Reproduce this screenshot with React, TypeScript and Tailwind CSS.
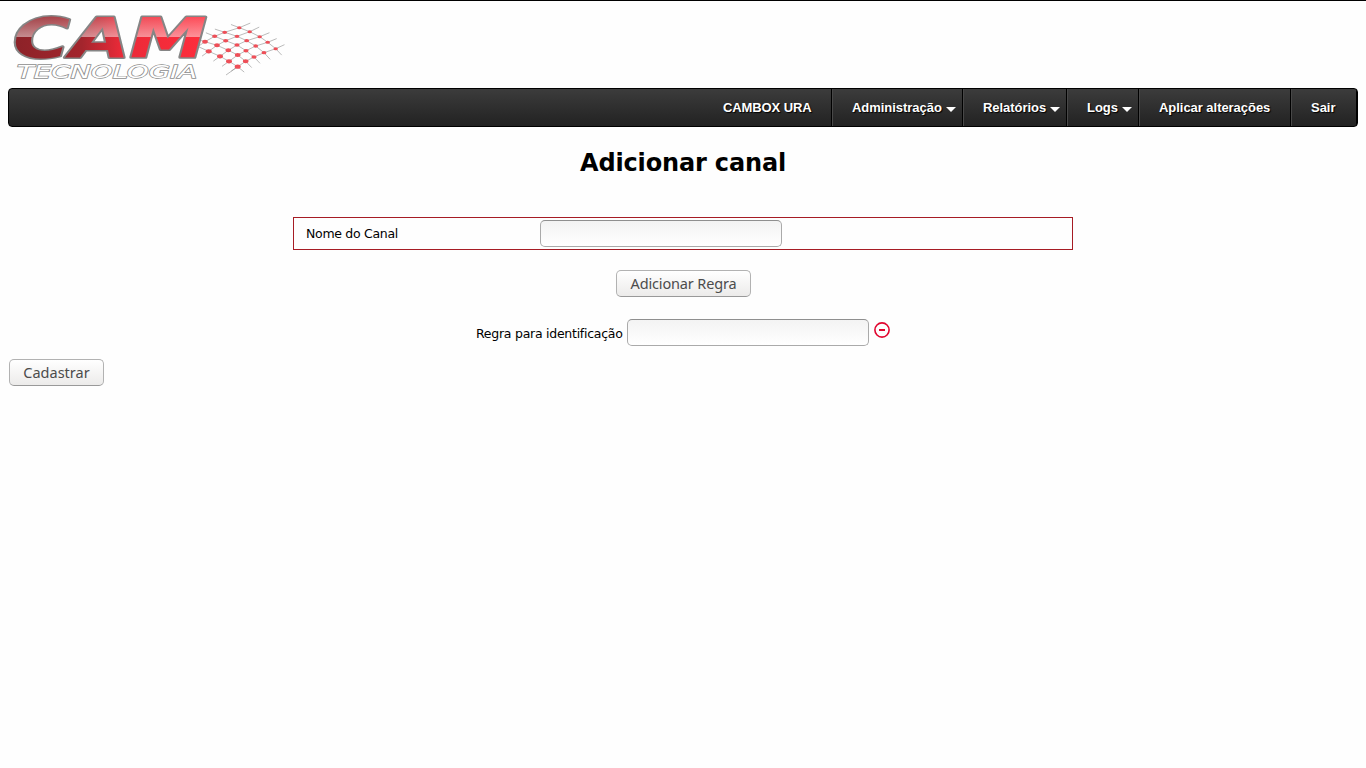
import type { ReactNode } from "react";

const mesh: [number, number][][] = [
  [[239.3, 27.7], [249.7, 31.7], [259.7, 36.7], [267.7, 42.3], [275.7, 48.7]],
  [[224.7, 32.3], [237, 36.3], [246.7, 40.7], [255.7, 46], [264, 52.7]],
  [[214.7, 36.3], [225.7, 40.7], [237, 45], [246, 50.7], [254, 57]],
  [[205, 41.7], [217, 45.3], [228.3, 50.3], [237.7, 55], [245.7, 61.3]],
  [[198, 46.5], [208.7, 51.3], [220, 56.3], [229, 61.3], [237.7, 66.7]],
];

function extend(points: [number, number][]) {
  const a = points[0];
  const b = points[1];
  const y = points[points.length - 2];
  const z = points[points.length - 1];
  const start = [a[0] - (b[0] - a[0]) * 0.8, a[1] - (b[1] - a[1]) * 0.8];
  const end = [z[0] + (z[0] - y[0]) * 0.75, z[1] + (z[1] - y[1]) * 1];
  return [start, ...points, end].map((p) => p.join(",")).join(" ");
}

function Logo() {
  const columns = mesh[0].map((_, i) => mesh.map((row) => row[i])).map((col) => [...col].reverse());
  return (
    <svg width="290" height="87" viewBox="0 0 290 87" className="block" aria-label="CAM Tecnologia">
      <defs>
        <linearGradient id="tone" gradientUnits="userSpaceOnUse" x1="14" y1="0" x2="208" y2="0">
          <stop offset="0" stopColor="#8c2228" />
          <stop offset="0.35" stopColor="#a3252d" />
          <stop offset="0.55" stopColor="#e92a38" />
          <stop offset="1" stopColor="#ff2d3c" />
        </linearGradient>
        <linearGradient id="shine" gradientUnits="userSpaceOnUse" x1="0" y1="15" x2="0" y2="58">
          <stop offset="0" stopColor="#fff" stopOpacity="0.12" />
          <stop offset="0.51" stopColor="#fff" stopOpacity="0.48" />
          <stop offset="0.52" stopColor="#fff" stopOpacity="0" />
        </linearGradient>
        <pattern id="gloss" patternUnits="userSpaceOnUse" width="290" height="87">
          <rect width="290" height="87" fill="url(#tone)" />
          <rect width="290" height="87" fill="url(#shine)" />
        </pattern>
      </defs>
      <g fill="none" stroke="#8d8d8d" strokeWidth="0.6">
        {mesh.map((row, i) => <polyline key={i} points={extend(row)} />)}
        {columns.map((col, i) => <polyline key={i} points={extend(col)} />)}
        <path d="M237.7 66.7L226 75" />
      </g>
      <g fill="#ee4f58">
        {mesh.slice(0, 4).concat([mesh[4].slice(1)]).map((row, j) =>
          row.map(([x, y], i) => <ellipse key={`${j}-${i}`} cx={x} cy={y} rx={2.2 + j * 0.2} ry={1.5 + j * 0.15} />)
        )}
      </g>
      <text
        x="13" y="57" textLength="194" lengthAdjust="spacingAndGlyphs"
        fill="url(#gloss)" stroke="#858585" strokeWidth="3" paintOrder="stroke" strokeLinejoin="round"
        fontFamily="DejaVu Sans" fontWeight="700" fontStyle="oblique" fontSize="55"
      >CAM</text>
      <text
        x="17" y="77.5" textLength="180" lengthAdjust="spacingAndGlyphs"
        fill="#fff" stroke="#8d8d8d" strokeWidth="1.3" paintOrder="stroke"
        fontFamily="DejaVu Sans" fontStyle="oblique" fontSize="18.5"
      >TECNOLOGIA</text>
    </svg>
  );
}

function NavItem({ width, arrow, children }: { width: string; arrow?: boolean; children: ReactNode }) {
  return (
    <li className={`${width} relative flex h-full items-center whitespace-nowrap border-r border-r-black border-l border-l-[#484848] pl-[19px] tracking-[-0.04px]`}>
      {children}
      {arrow && (
        <span className="absolute right-[6px] top-[18px] h-0 w-0 border-x-[5px] border-t-[5px] border-x-transparent border-t-white" />
      )}
    </li>
  );
}

function Field({ label }: { label: string }) {
  return (
    <input
      aria-label={label}
      className="h-[27px] w-[242px] shrink-0 rounded-[5px] border border-[#aaa] border-t-[#8f8f8f] bg-linear-to-b from-[#f3f3f3] to-white px-2 outline-none"
    />
  );
}

function Button({ className, children }: { className: string; children: ReactNode }) {
  return (
    <button className={`${className} flex h-[27px] items-center justify-center whitespace-nowrap rounded-[5px] border border-[#b2b2b2] border-b-[#999] bg-linear-to-b from-white to-[#ecebea] text-[14.5px] leading-none text-[#4c4c4c] [font-family:'Noto_Sans',sans-serif]`}>
      {children}
    </button>
  );
}

export default function App() {
  return (
    <div className="flex h-screen flex-col overflow-hidden border-t border-black bg-[#fefefe] text-black [font-family:'DejaVu_Sans',sans-serif]">
      <header className="h-[87px] shrink-0">
        <div className="-mt-px">
          <Logo />
        </div>
      </header>
      <nav className="mx-2 h-[39px] shrink-0 overflow-hidden rounded-[4px] border border-black bg-linear-to-b from-[#3c3c3c] to-[#222]">
        <ul className="flex h-full justify-end text-[13px] font-bold text-white [font-family:'Liberation_Sans',Arial,sans-serif] [text-shadow:1px_1px_1px_#000]">
          <li className="flex h-full w-[129px] items-center border-r border-black pl-5 tracking-[-0.1px]">CAMBOX URA</li>
          <NavItem width="w-[131px]" arrow>Administração</NavItem>
          <NavItem width="w-[104px]" arrow>Relatórios</NavItem>
          <NavItem width="w-[72px]" arrow>Logs</NavItem>
          <NavItem width="w-[152px]">Aplicar alterações</NavItem>
          <NavItem width="w-[66px]">Sair</NavItem>
        </ul>
      </nav>
      <main className="flex flex-col">
        <h1 className="mt-[22px] h-7 text-center text-2xl font-bold leading-7 tracking-[-0.15px]">Adicionar canal</h1>
        <div className="mx-auto mt-[40px] flex h-[33px] w-[780px] items-center border border-[#a61c24] pl-3">
          <label className="w-[234px] whitespace-nowrap pt-[2px] text-[12.5px] tracking-[-0.3px]">Nome do Canal</label>
          <Field label="Nome do Canal" />
        </div>
        <div className="mt-5 flex justify-center pl-px">
          <Button className="w-[135px] tracking-[-0.15px]">Adicionar Regra</Button>
        </div>
        <div className="mt-[22px] flex h-[27px] items-center pl-[476px]">
          <label className="w-[151px] whitespace-nowrap pt-[4px] text-[12.5px] tracking-[-0.26px]">Regra para identificação</label>
          <Field label="Regra para identificação" />
          <svg width="16" height="16" viewBox="0 0 16 16" className="-mt-[5px] ml-[5px]" fill="none" stroke="#e1062f">
            <circle cx="8" cy="8" r="7.1" strokeWidth="1.6" />
            <path d="M5 8h6" strokeWidth="2" />
          </svg>
        </div>
        <div className="ml-[9px] mt-[13px]">
          <Button className="w-[95px]">Cadastrar</Button>
        </div>
      </main>
    </div>
  );
}
